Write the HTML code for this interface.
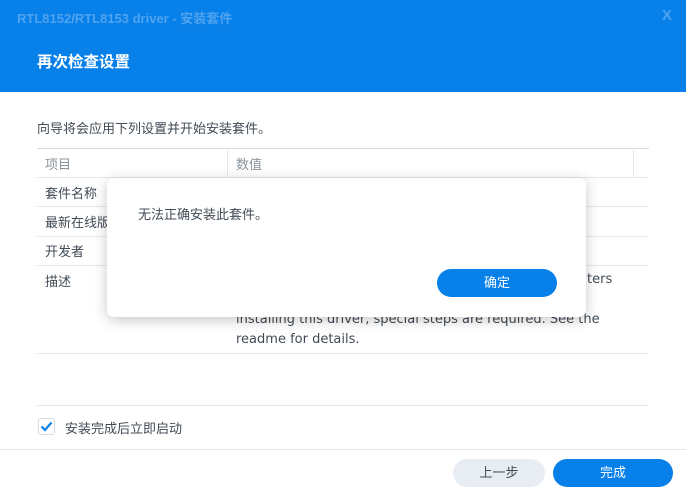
<!DOCTYPE html>
<html><head><meta charset="utf-8"><style>
*{margin:0;padding:0;box-sizing:border-box}
body{width:686px;height:487px;overflow:hidden;background:#fff;font-family:"Liberation Sans","Noto Sans CJK SC",sans-serif;position:relative;color:#414b55}
.abs{position:absolute}
.hdr{left:0;top:0;width:686px;height:92px;background:#0880ea}
.t1{left:17px;top:8px;font-size:13px;font-weight:bold;color:#4fa3ef}
.x{left:662px;top:7px;font-size:15px;font-weight:bold;color:#4fa3ef}
.t2{left:37px;top:50px;font-size:15.5px;font-weight:bold;color:#fff}
.hl{left:37px;width:612px;height:1px;background:#e3e8ef}
.cell{font-size:13px;color:#414b55}
.modal{left:107px;top:178px;width:479px;height:139px;background:#fff;border-radius:7px;box-shadow:0 3px 14px rgba(0,0,0,.22)}
.btn{border-radius:15px;font-size:13px;text-align:center;line-height:28px}
.dj{font-family:'DejaVu Sans',sans-serif;white-space:nowrap;line-height:20px}
</style></head><body>
<div class="abs hdr"></div>
<div class="abs t1">RTL8152/RTL8153 driver - 安装套件</div>
<div class="abs x">X</div>
<div class="abs t2">再次检查设置</div>
<div class="abs cell" style="left:37px;top:118px">向导将会应用下列设置并开始安装套件。</div>
<div class="abs hl" style="top:148px;background:#d5dde7"></div>
<div class="abs" style="left:227px;top:148px;width:1px;height:29px;background:#e3e8ef"></div>
<div class="abs" style="left:633px;top:148px;width:1px;height:29px;background:#e3e8ef"></div>
<div class="abs cell" style="left:45px;top:154px;color:#8a939c">项目</div>
<div class="abs cell" style="left:236px;top:154px;color:#8a939c">数值</div>
<div class="abs hl" style="top:177px"></div>
<div class="abs cell" style="left:45px;top:183px">套件名称</div>
<div class="abs hl" style="top:206px"></div>
<div class="abs cell" style="left:45px;top:212px">最新在线版本</div>
<div class="abs hl" style="top:236px"></div>
<div class="abs cell" style="left:45px;top:241px">开发者</div>
<div class="abs hl" style="top:265px"></div>
<div class="abs cell" style="left:45px;top:271px">描述</div>
<div class="abs cell dj" style="left:236px;top:270px">This driver supports Realtek USB Ethernet adap<br>Realtek USB Ethernet. Before and after<br>installing this driver, special steps are required. See the<br>readme for details.</div>
<div class="abs cell dj" style="left:587px;top:270px">ters</div>
<div class="abs hl" style="top:353px"></div>
<div class="abs hl" style="top:405px"></div>
<div class="abs" style="left:38px;top:418px;width:17px;height:17px;border:1px solid #d5dde7;border-radius:3px"></div>
<svg class="abs" style="left:38px;top:418px" width="17" height="17"><path d="M3.5 8.5 L7 12 L13.5 4.5" stroke="#0880ea" stroke-width="2.2" fill="none"/></svg>
<div class="abs cell" style="left:65px;top:418px">安装完成后立即启动</div>
<div class="abs" style="left:0;top:449px;width:686px;height:1px;background:#e3e8ef"></div>
<div class="abs btn" style="left:453px;top:459px;width:92px;background:#e8edf3;color:#414b55">上一步</div>
<div class="abs btn" style="left:553px;top:459px;width:120px;background:#0880ea;color:#fff">完成</div>
<div class="abs modal"></div>
<div class="abs cell" style="left:138px;top:204px">无法正确安装此套件。</div>
<div class="abs btn" style="left:437px;top:269px;width:120px;background:#0880ea;color:#fff">确定</div>
</body></html>
